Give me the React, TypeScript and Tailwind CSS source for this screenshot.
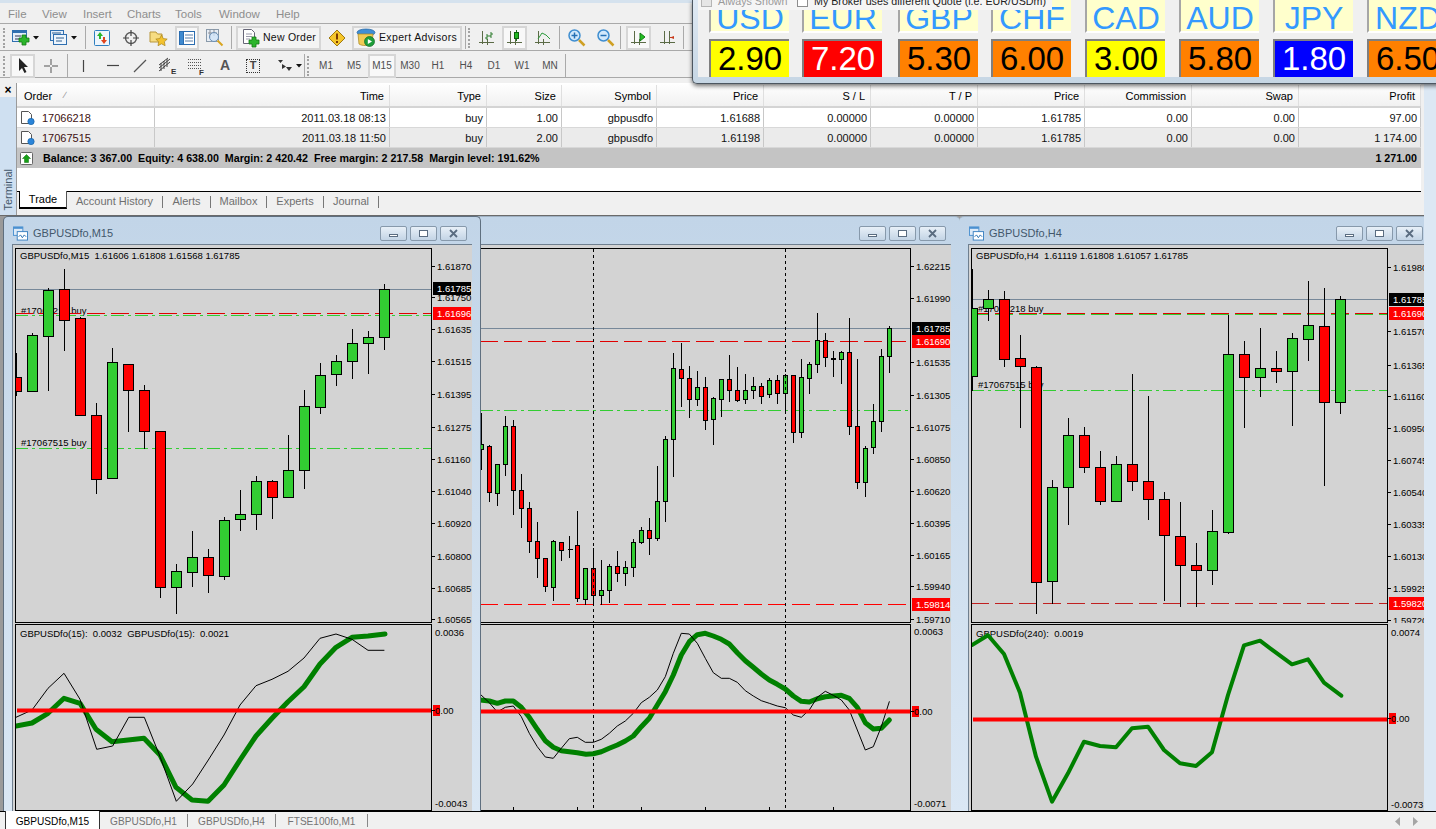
import type { ReactNode } from 'react';
import clsx from 'clsx';

type Candle = [number, number, number, number, 'r' | 'g'];
type Pt = [number, number];

const m15: Candle[] = [
  [245, 320, 364, 375, 'r'], [187, 196, 364, 364, 'g'], [52, 61, 199, 359, 'g'], [-6, 58, 149, 239, 'r'],
  [137, 145, 436, 436, 'r'], [397, 436, 628, 668, 'r'], [232, 277, 625, 625, 'g'], [283, 283, 361, 482, 'r'],
  [343, 361, 484, 535, 'r'], [480, 484, 952, 980, 'r'], [880, 904, 952, 1028, 'g'], [781, 862, 907, 947, 'g'],
  [835, 862, 916, 965, 'r'], [739, 751, 919, 926, 'g'], [658, 733, 748, 780, 'g'], [616, 634, 733, 776, 'g'],
  [628, 634, 682, 743, 'r'], [493, 601, 682, 682, 'g'], [358, 409, 601, 654, 'g'], [277, 316, 412, 428, 'g'],
  [253, 274, 313, 344, 'g'], [175, 220, 274, 323, 'g'], [181, 202, 220, 308, 'g'], [40, 58, 202, 236, 'g'],
];

const h1: Candle[] = [
  [336, 433, 448, 507, 'g'], [433, 439, 577, 603, 'r'], [493, 493, 580, 614, 'g'], [346, 379, 493, 525, 'g'],
  [358, 379, 571, 642, 'r'], [520, 571, 625, 682, 'r'], [603, 625, 724, 756, 'r'], [664, 724, 775, 831, 'r'],
  [772, 775, 859, 872, 'r'], [718, 724, 862, 899, 'g'], [724, 727, 751, 780, 'r'], [706, 748, 748, 771, 'g'],
  [631, 736, 895, 902, 'r'], [805, 805, 898, 913, 'g'], [742, 805, 886, 913, 'r'], [778, 871, 886, 913, 'g'],
  [790, 799, 871, 905, 'g'], [751, 799, 820, 843, 'r'], [781, 802, 820, 855, 'g'], [715, 727, 802, 828, 'g'],
  [679, 691, 727, 730, 'g'], [652, 691, 715, 762, 'r'], [496, 604, 715, 721, 'g'], [406, 418, 604, 663, 'g'],
  [157, 205, 418, 528, 'g'], [125, 208, 235, 318, 'r'], [196, 235, 298, 351, 'r'], [211, 262, 298, 315, 'g'],
  [229, 262, 361, 387, 'r'], [289, 295, 358, 432, 'g'], [235, 238, 298, 348, 'g'], [163, 238, 271, 303, 'r'],
  [199, 271, 301, 303, 'r'], [220, 271, 298, 309, 'g'], [229, 259, 271, 295, 'g'], [247, 259, 289, 309, 'r'],
  [232, 241, 283, 292, 'g'], [223, 241, 280, 309, 'r'], [220, 226, 280, 340, 'g'], [223, 226, 397, 426, 'r'],
  [175, 232, 397, 411, 'g'], [184, 193, 235, 280, 'g'], [37, 121, 193, 217, 'g'], [97, 121, 172, 199, 'r'],
  [151, 175, 176, 229, 'g'], [151, 157, 178, 250, 'g'], [52, 157, 379, 402, 'r'], [175, 379, 547, 564, 'r'],
  [436, 445, 547, 588, 'g'], [310, 364, 442, 460, 'g'], [145, 169, 364, 393, 'g'], [76, 85, 169, 217, 'g'],
];

const h4: Candle[] = [
  [-6, 115, 319, 361, 'g'], [58, 88, 115, 150, 'g'], [61, 88, 268, 288, 'r'], [193, 265, 289, 470, 'r'],
  [286, 292, 937, 1028, 'r'], [628, 652, 934, 1000, 'g'], [442, 496, 652, 761, 'g'], [469, 496, 592, 605, 'r'],
  [541, 592, 694, 701, 'r'], [556, 583, 694, 694, 'g'], [310, 583, 634, 659, 'r'], [376, 634, 688, 746, 'r'],
  [664, 688, 796, 989, 'r'], [694, 799, 886, 1007, 'r'], [817, 886, 901, 1007, 'r'], [718, 784, 901, 941, 'g'],
  [133, 253, 787, 790, 'g'], [211, 253, 322, 470, 'r'], [172, 295, 322, 377, 'g'], [241, 295, 304, 335, 'r'],
  [187, 205, 304, 464, 'g'], [31, 166, 208, 269, 'g'], [52, 169, 397, 644, 'r'], [76, 88, 397, 428, 'g'],
];

const m15Signal: Pt[] = [[48, 378], [96, 369], [144, 340], [192, 295], [240, 310], [288, 388], [336, 425], [384, 420], [432, 415], [480, 465], [528, 562], [576, 600], [624, 604], [672, 555], [720, 480], [768, 408], [816, 355], [864, 305], [912, 260], [960, 192], [1008, 142], [1056, 112], [1104, 108], [1155, 102]];
const m15Main: Pt[] = [[48, 352], [96, 330], [144, 265], [192, 220], [240, 298], [290, 448], [338, 438], [386, 352], [433, 352], [481, 472], [529, 604], [578, 552], [625, 480], [672, 405], [720, 315], [768, 257], [816, 238], [864, 214], [912, 174], [960, 115], [1008, 102], [1056, 118], [1104, 151], [1152, 151]];
const h1Signal: Pt[] = [[0, 240], [28, 243], [52, 250], [76, 243], [100, 243], [124, 262], [148, 292], [172, 328], [196, 362], [220, 382], [244, 392], [268, 395], [292, 398], [318, 403], [340, 401], [364, 395], [388, 385], [412, 375], [436, 363], [460, 348], [484, 320], [508, 295], [532, 255], [556, 215], [580, 165], [604, 105], [628, 65], [652, 44], [676, 40], [700, 48], [724, 58], [748, 72], [772, 98], [796, 122], [820, 142], [844, 162], [868, 180], [892, 193], [916, 207], [940, 228], [964, 244], [988, 246], [1012, 236], [1036, 230], [1060, 228], [1084, 226], [1108, 235], [1132, 262], [1156, 308], [1180, 327], [1204, 325], [1228, 300]];
const h1Main: Pt[] = [[0, 222], [28, 248], [52, 276], [76, 262], [100, 258], [124, 290], [148, 340], [172, 380], [196, 411], [220, 415], [244, 385], [268, 356], [292, 352], [316, 367], [340, 367], [364, 358], [388, 340], [412, 318], [436, 303], [460, 280], [484, 248], [508, 232], [532, 210], [556, 170], [580, 100], [604, 40], [628, 42], [652, 70], [676, 115], [700, 158], [724, 175], [748, 175], [772, 187], [796, 212], [820, 228], [844, 242], [868, 250], [892, 258], [916, 263], [940, 285], [964, 292], [988, 270], [1012, 232], [1036, 214], [1060, 226], [1084, 240], [1108, 270], [1132, 330], [1156, 390], [1180, 380], [1204, 320], [1228, 245]];
const h4Signal: Pt[] = [[36, 75], [84, 46], [132, 102], [180, 218], [228, 410], [276, 545], [324, 460], [372, 365], [420, 378], [468, 382], [516, 325], [564, 320], [612, 390], [660, 430], [708, 438], [756, 397], [804, 225], [852, 76], [900, 62], [948, 98], [996, 133], [1044, 118], [1092, 188], [1144, 227]];

function Candles({ data, first, step, half, ox, oy }: { data: Candle[]; first: number; step: number; half: number; ox: number; oy: number }) {
  return (
    <g shapeRendering="crispEdges">
      {data.map(([hi, top, bot, lo, c], i) => {
        const x = Math.floor(ox + (first + step * i) / 3) + 0.5;
        const py = (v: number) => Math.round(oy + v / 3) + 0.5;
        const h = py(bot) - py(top);
        return (
          <g key={i}>
            <line x1={x} x2={x} y1={py(hi)} y2={py(lo)} stroke="#000" />
            {h > 0 ? (
              <rect x={x - half} y={py(top)} width={half * 2} height={h} fill={c === 'r' ? '#ff0000' : '#32cd32'} stroke="#000" />
            ) : (
              <line x1={x - half} x2={x + half + 1} y1={py(top)} y2={py(top)} stroke="#000" />
            )}
          </g>
        );
      })}
    </g>
  );
}

function Series({ pts, ox, oy, w, color }: { pts: Pt[]; ox: number; oy: number; w: number; color: string }) {
  const d = pts.map(([x, y]) => `${(ox + x / 3).toFixed(1)},${(oy + y / 3).toFixed(1)}`).join(' ');
  return <polyline points={d} fill="none" stroke={color} strokeWidth={w} strokeLinejoin="round" strokeLinecap="round" />;
}

function HLine({ y, x1, x2, color, dash }: { y: number; x1: number; x2: number; color: string; dash?: string }) {
  return <line x1={x1} x2={x2} y1={y + 0.5} y2={y + 0.5} stroke={color} strokeDasharray={dash} shapeRendering="crispEdges" />;
}

function Label({ x, y, children, fill = '#000' }: { x: number; y: number; children: ReactNode; fill?: string }) {
  return (
    <text x={x} y={y} fontSize={9.5} fill={fill} className="whitespace-pre">
      {children}
    </text>
  );
}

function PriceAxis({ x, labels, boxes }: { x: number; labels: [string, number][]; boxes: [string, number, string][] }) {
  return (
    <>
      {labels.map(([t, y]) => (
        <g key={t}>
          <line x1={x} x2={x + 3} y1={y + 0.5} y2={y + 0.5} stroke="#000" shapeRendering="crispEdges" />
          <Label x={x + 5} y={y + 3.5}>{t}</Label>
        </g>
      ))}
      {boxes.map(([t, y, c]) => (
        <g key={t}>
          <rect x={x + 1} y={y - 6} width={38} height={13} fill={c} />
          <Label x={x + 5} y={y + 3.5} fill="#fff">{t}</Label>
        </g>
      ))}
    </>
  );
}

function MacdAxis({ x, hi, zero, lo }: { x: number; hi: [string, number]; zero: number; lo: [string, number] }) {
  return (
    <>
      <rect x={x + 1} y={zero - 5} width={7} height={11} fill="#ff0000" />
      <line x1={x} x2={x + 3} y1={zero + 0.5} y2={zero + 0.5} stroke="#000" />
      <Label x={x + 3} y={hi[1] + 3.5}>{hi[0]}</Label>
      <Label x={x + 3} y={zero + 3.5}>0.00</Label>
      <Label x={x + 3} y={lo[1] + 3.5}>{lo[0]}</Label>
    </>
  );
}

function TitleIcon() {
  return (
    <svg width="15" height="15" viewBox="0 0 16 15" className="shrink-0">
      <rect x="0.5" y="0.5" width="10" height="9" fill="#dceaf8" stroke="#4a90d0" />
      <rect x="0.5" y="0.5" width="10" height="2" fill="#4a90d0" />
      <rect x="4.5" y="5.5" width="11" height="9" fill="#fff" stroke="#3a80c0" />
      <path d="M6 11l2-2 2 3 2-3 2 2" fill="none" stroke="#2a70b0" />
    </svg>
  );
}

function WinButton({ kind }: { kind: 'min' | 'max' | 'close' }) {
  return (
    <div className="w-[27px] h-[15px] border border-[#8799ab] rounded-[2px] bg-gradient-to-b from-[#e8f0f8] to-[#c3d4e5] flex items-center justify-center">
      <svg width="11" height="9" viewBox="0 0 11 9">
        {kind === 'min' && <rect x="1.5" y="5.5" width="8" height="2" fill="#fff" stroke="#5a6c80" />}
        {kind === 'max' && <rect x="1.5" y="1.5" width="8" height="6" fill="#fff" stroke="#5a6c80" />}
        {kind === 'close' && <path d="M2 1l7 7M9 1l-7 7" stroke="#5a6c80" strokeWidth="1.8" />}
      </svg>
    </div>
  );
}

function ChartWindow({ title, className, plotLeft, plotWidth, active, upper, lower, upperAxis, lowerAxis }: {
  title: string; className: string; plotLeft: number; plotWidth: number; active?: boolean;
  upper: ReactNode; lower: ReactNode; upperAxis: ReactNode; lowerAxis: ReactNode;
}) {
  const plotRight = plotLeft + plotWidth;
  return (
    <div className={clsx('absolute top-0 h-[596px] flex flex-col rounded-t-[5px] bg-gradient-to-b from-[#c2d5e8] to-[#dae7f4] border-[#5f6f7f]', active ? 'border-x border-t px-[8px]' : 'border-t border-t-[#9fb1c3] px-[9px]', className)}>
      <div className="h-[27px] flex items-center shrink-0 gap-[3px] pt-[5px]">
        <div className="flex items-center gap-[5px] flex-1 pl-[1px]">
          <TitleIcon />
          <span className="text-[11px] text-[#43586c]">{title}</span>
        </div>
        <WinButton kind="min" />
        <WinButton kind="max" />
        <WinButton kind="close" />
        <div className="w-[2px]" />
      </div>
      <div className="flex-1 min-h-0 flex flex-col bg-[#d3d3d3] pt-[3px] pl-[2px] border-t border-l border-[#6f7f8f] gap-px">
        <div className="flex h-[375px] shrink-0">
          <div className="border border-black overflow-hidden w-full">
            <svg width={plotWidth - 2} height={373} viewBox={`${plotLeft + 1} 249 ${plotWidth - 2} 373`} className="block">{upper}</svg>
          </div>
          <svg width={40} height={375} viewBox={`${plotRight} 248 40 375`} className="block shrink-0">{upperAxis}</svg>
        </div>
        <div className="flex h-[187px] shrink-0">
          <div className="border border-black overflow-hidden w-full">
            <svg width={plotWidth - 2} height={185} viewBox={`${plotLeft + 1} 625 ${plotWidth - 2} 185`} className="block">{lower}</svg>
          </div>
          <svg width={40} height={187} viewBox={`${plotRight} 624 40 187`} className="block shrink-0">{lowerAxis}</svg>
        </div>
      </div>
    </div>
  );
}

/* toolbar bits */
function Grip({ className }: { className?: string }) {
  return <div className={clsx('w-[3px] h-[20px] shrink-0 border-l-2 border-dotted border-[#a2a2a2]', className)} />;
}
function Sep({ className }: { className?: string }) {
  return <div className={clsx('w-px h-[23px] shrink-0 bg-[#aaaaaa]', className)} />;
}
function Btn({ className, pressed, children }: { className: string; pressed?: boolean; children?: ReactNode }) {
  return (
    <div className={clsx('h-[24px] shrink-0 flex items-center justify-center gap-[3px]', pressed && 'border-2 border-[#d6d6d6] bg-[#f8f8f8]', className)}>
      {children}
    </div>
  );
}
function Caret() {
  return (
    <svg width="6" height="4" viewBox="0 0 6 4" className="shrink-0">
      <path d="M0 0h6L3 3.5z" fill="#111" />
    </svg>
  );
}
function Icon({ w = 18, h = 18, children }: { w?: number; h?: number; children: ReactNode }) {
  return (
    <svg width={w} height={h} viewBox={`0 0 ${w} ${h}`} className="shrink-0">
      {children}
    </svg>
  );
}
const GreenPlus = ({ x, y }: { x: number; y: number }) => (
  <path d={`M${x + 3} ${y}h4v3h3v4h-3v3h-4v-3h-3v-4h3z`} fill="#2bb52b" stroke="#157a15" strokeWidth="0.8" />
);
const Axes = () => <path d="M4.5 2v13M1 13.5h15M9.5 10v6" stroke="#5b6b46" fill="none" />;

function Toolbar1() {
  return (
    <div className="h-[27px] flex items-center pl-[3px] pt-px border-b border-[#a9a9a9]">
      <Grip />
      <Btn className="w-[38px]">
        <Icon w={19} h={17}>
          <rect x="1.5" y="1.5" width="14" height="11" fill="#e3eefa" stroke="#2f6fb0" />
          <rect x="1.5" y="1.5" width="14" height="2.5" fill="#2f6fb0" />
          <path d="M4 7h6M4 10h4" stroke="#335" />
          <GreenPlus x={8} y={6} />
        </Icon>
        <Caret />
      </Btn>
      <Btn className="w-[37px]">
        <Icon w={19} h={17}>
          <rect x="1.5" y="1.5" width="13" height="10" fill="#e3eefa" stroke="#2f6fb0" />
          <rect x="4.5" y="5.5" width="13" height="10" fill="#eef5fc" stroke="#2f6fb0" />
          <path d="M7 9h8M7 12h6M3 4h9" stroke="#2f5f90" />
        </Icon>
        <Caret />
      </Btn>
      <Sep className="ml-[4px]" />
      <Btn className="w-[32px]">
        <Icon>
          <rect x="1.5" y="1.5" width="15" height="15" rx="1" fill="#eef5fc" stroke="#2f7fc0" />
          <path d="M7 3l3 4H8v3H6V7H4z" fill="#2bb52b" />
          <path d="M11 15l-3-4h2V8h2v3h2z" fill="#e0441e" />
        </Icon>
      </Btn>
      <Btn className="w-[25px]">
        <Icon>
          <circle cx="9" cy="9" r="5.5" fill="none" stroke="#5a5a5a" strokeWidth="1.4" />
          <path d="M9 1v6M9 11v6M1 9h6M11 9h6" stroke="#444" strokeWidth="1.2" />
        </Icon>
      </Btn>
      <Btn className="w-[30px]">
        <Icon w={19} h={18}>
          <path d="M1 3h6l1.500 2H13v8H1z" fill="#f6dc82" stroke="#b8963a" />
          <path d="M12.500 6l1.800 3.600 3.900.5-2.800 2.700.7 3.900-3.600-1.900-3.500 1.900.7-3.900-2.900-2.700 4-.5z" fill="#f3c22e" stroke="#a8821a" strokeWidth="0.7" />
        </Icon>
      </Btn>
      <Btn className="ml-[2px] w-[24px]" pressed>
        <Icon>
          <rect x="1.500" y="2.500" width="15" height="13" fill="#fff" stroke="#2a6cb0" />
          <rect x="1.500" y="2.500" width="4" height="13" fill="#3f8ad0" stroke="#2a6cb0" />
          <path d="M7 6h8M7 9h8M7 12h8" stroke="#5a7ea8" />
        </Icon>
      </Btn>
      <Btn className="w-[31px]">
        <Icon w={19} h={19}>
          <rect x="1.500" y="1.500" width="12" height="12" fill="#e8eef5" stroke="#8a9aaa" />
          <path d="M5 2v8M9 1v7M3 5h9" stroke="#8a8f98" />
          <circle cx="9" cy="9" r="4.500" fill="#cfe4f8" fillOpacity="0.8" stroke="#6a8fb5" />
          <path d="M12.500 12.500l5 5" stroke="#d9a520" strokeWidth="2" />
        </Icon>
      </Btn>
      <Sep className="ml-px" />
      <Btn className="ml-[4px] w-[85px] border-2 border-[#d6d6d6] bg-[#f4f4f4] justify-start pl-[3px]">
        <Icon w={20} h={20}>
          <path d="M2.500 1.500h8l3 3v11h-11z" fill="#fff" stroke="#667" />
          <path d="M5 6h6M5 8.500h6M5 11h4" stroke="#99a" />
          <GreenPlus x={8} y={9} />
        </Icon>
        <span className="-ml-[1px] whitespace-nowrap text-[10.500px] tracking-[0.25px] text-[#111]">New Order</span>
      </Btn>
      <Btn className="w-[31px]">
        <Icon>
          <path d="M9 1l8 8-8 8-8-8z" fill="#f6c62a" stroke="#a07a10" strokeLinejoin="round" />
          <path d="M9 4.500v6" stroke="#7a3a00" strokeWidth="2" />
          <rect x="8" y="12" width="2" height="2" fill="#7a3a00" />
        </Icon>
      </Btn>
      <Btn className="w-[110px] border-2 border-[#d6d6d6] bg-[#f4f4f4] justify-start pl-[1px]">
        <Icon w={22} h={20}>
          <ellipse cx="11" cy="4.500" rx="9" ry="3.500" fill="#3e8fd6" stroke="#22609c" strokeWidth="0.7" />
          <path d="M3 6h15l-1 10c-4 2-10 2-13 0z" fill="#f0cb55" stroke="#a5841f" strokeWidth="0.7" />
          <circle cx="14.500" cy="13.500" r="5" fill="#1e9e3a" stroke="#0e6a22" strokeWidth="0.7" />
          <path d="M12.800 11l4.200 2.500-4.200 2.500z" fill="#fff" />
        </Icon>
        <span className="-ml-[1px] whitespace-nowrap text-[10.500px] tracking-[0.35px] text-[#111]">Expert Advisors</span>
      </Btn>
      <Sep className="ml-[3px]" />
      <Grip className="ml-[2px]" />
      <Btn className="w-[31px]">
        <Icon>
          <Axes />
          <path d="M9 5v6M9 7h2M7 9h2M13 3v6M13 5h2M11 7h2" stroke="#2f7d2f" fill="none" />
        </Icon>
      </Btn>
      <Btn className="w-[25px]" pressed>
        <Icon>
          <Axes />
          <path d="M10.500 1v11" stroke="#1f6f1f" />
          <rect x="8.500" y="3.500" width="4" height="6" fill="#22b822" stroke="#0d5f0d" />
        </Icon>
      </Btn>
      <Btn className="w-[31px]">
        <Icon>
          <Axes />
          <path d="M4 10l4-6 4 2 4 4" stroke="#2a9a3a" fill="none" />
        </Icon>
      </Btn>
      <Sep className="ml-px" />
      <Btn className="w-[32px]">
        <Icon w={19} h={19}>
          <circle cx="7.500" cy="7.500" r="5.500" fill="#d2e9fb" stroke="#3f8ed0" strokeWidth="1.500" />
          <path d="M7.500 4.500v6M4.500 7.500h6" stroke="#2470b4" strokeWidth="1.500" />
          <path d="M12 12l5.500 5.500" stroke="#cfa024" strokeWidth="2.500" />
        </Icon>
      </Btn>
      <Btn className="w-[26px]">
        <Icon w={19} h={19}>
          <circle cx="7.500" cy="7.500" r="5.500" fill="#d2e9fb" stroke="#3f8ed0" strokeWidth="1.500" />
          <path d="M4.500 7.500h6" stroke="#2470b4" strokeWidth="1.500" />
          <path d="M12 12l5.500 5.500" stroke="#cfa024" strokeWidth="2.500" />
        </Icon>
      </Btn>
      <Sep className="ml-[2px]" />
      <Btn className="ml-[5px] w-[25px]" pressed>
        <Icon>
          <Axes />
          <path d="M10 4l5 4-5 4z" fill="#22c022" stroke="#137a13" />
        </Icon>
      </Btn>
      <Btn className="w-[32px]">
        <Icon>
          <path d="M6.500 2v13M2 13.500h15M11.500 2v13" stroke="#5b6b46" fill="none" />
          <path d="M16 7l-4 1.500L16 10z" fill="#c8391a" />
          <path d="M12 8.500h4" stroke="#c8391a" />
        </Icon>
      </Btn>
      <Sep />
    </div>
  );
}

function PeriodBtn({ label, pressed }: { label: string; pressed?: boolean }) {
  return (
    <Btn className="w-[28px] text-[10px] text-[#4f4f4f]" pressed={pressed}>
      {label}
    </Btn>
  );
}

function Toolbar2() {
  return (
    <div className="h-[27px] flex items-center pl-[3px] pt-[3px] border-b border-[#a9a9a9]">
      <Grip />
      <Btn className="ml-[4px] w-[25px]" pressed>
        <Icon w={12} h={17}>
          <path d="M2 1v13l3-3 2.500 5 2-1-2.500-5h4z" fill="#222" />
        </Icon>
      </Btn>
      <Btn className="w-[31px]">
        <Icon>
          <path d="M9 2v6M9 10v6M2 9h6M10 9h6" stroke="#555" />
        </Icon>
      </Btn>
      <Sep className="ml-px" />
      <Btn className="w-[32px]">
        <Icon w={4} h={14}>
          <path d="M1.500 1v12" stroke="#444" strokeWidth="1.200" />
        </Icon>
      </Btn>
      <Btn className="w-[26px]">
        <Icon w={14} h={4}>
          <path d="M1 1.500h12" stroke="#444" strokeWidth="1.200" />
        </Icon>
      </Btn>
      <Btn className="w-[28px]">
        <Icon w={14} h={14}>
          <path d="M1 13L13 1" stroke="#555" strokeWidth="1.200" />
        </Icon>
      </Btn>
      <Btn className="w-[27px]">
        <Icon w={19} h={18}>
          <path d="M1 11L12 2M1 14L12 5M1 8L10 1" stroke="#444" />
          <path d="M3 6v8M6 4v8M9 2v8" stroke="#444" />
          <text x="13" y="17" fontSize="8" fontWeight="700" fill="#333">E</text>
        </Icon>
      </Btn>
      <Btn className="w-[30px]">
        <Icon w={19} h={18}>
          <path d="M1 2.500h13M1 5.500h13M1 8.500h13M1 11.500h13" stroke="#555" strokeDasharray="1 1" />
          <text x="12" y="17.500" fontSize="8" fontWeight="700" fill="#333">F</text>
        </Icon>
      </Btn>
      <Btn className="w-[28px] text-[14px] font-bold text-[#555]">A</Btn>
      <Btn className="w-[28px]">
        <div className="w-[14px] h-[14px] border border-dotted border-[#333] flex items-center justify-center text-[11px] font-bold leading-none text-[#444]">T</div>
      </Btn>
      <Btn className="w-[37px] pl-[8px]">
        <Icon w={16} h={14}>
          <path d="M1 1h5L3.500 4zM5 5l4 2.500L5 10zM9 8h6l-3 4z" fill="#333" />
        </Icon>
        <Caret />
      </Btn>
      <Sep />
      <Grip className="ml-[2px]" />
      <div className="w-[2px]" />
      {['M1', 'M5', 'M15', 'M30', 'H1', 'H4', 'D1', 'W1', 'MN'].map((l) => (
        <PeriodBtn key={l} label={l} pressed={l === 'M15'} />
      ))}
      <Sep className="ml-px" />
    </div>
  );
}

const currencies = [
  { name: 'USD', value: '2.90', bg: 'bg-[#ffff00]', fg: 'text-black' },
  { name: 'EUR', value: '7.20', bg: 'bg-[#ff0000]', fg: 'text-white' },
  { name: 'GBP', value: '5.30', bg: 'bg-[#ff8000]', fg: 'text-black' },
  { name: 'CHF', value: '6.00', bg: 'bg-[#ff8000]', fg: 'text-black' },
  { name: 'CAD', value: '3.00', bg: 'bg-[#ffff00]', fg: 'text-black' },
  { name: 'AUD', value: '5.80', bg: 'bg-[#ff8000]', fg: 'text-black' },
  { name: 'JPY', value: '1.80', bg: 'bg-[#0000ff]', fg: 'text-white' },
  { name: 'NZD', value: '6.50', bg: 'bg-[#ff8000]', fg: 'text-black' },
];

function MeterWindow() {
  return (
    <div className="absolute left-[692px] top-0 w-[760px] h-[84px] rounded-bl-[5px] bg-gradient-to-b from-[#dfe9f3] to-[#c6d6e4] border-l border-b border-[#4c5660] pl-[5px] pb-[6px] shadow-[0_2px_4px_rgba(0,0,0,0.55)]">
      <div className="relative h-full bg-[#f0f0f0] overflow-hidden">
        <div className="absolute left-0 top-0 h-[10px] w-[354px] bg-[#f5f5f5] flex items-center text-[10.700px] leading-none z-10">
          <div className="ml-[3px] w-[11px] h-[11px] border border-[#b5b5b5] bg-[#e6e6e6] shrink-0 -mt-[8px]" />
          <span className="ml-[6px] w-[73px] text-[#9a9a9a] whitespace-nowrap -mt-[7px]">Always Shown</span>
          <div className="ml-[6px] w-[11px] h-[11px] border border-[#8e8e8e] bg-white shrink-0 -mt-[8px]" />
          <span className="ml-[6px] whitespace-nowrap text-[#222] -mt-[7px]">My Broker uses different Quote (i.e. EUR/USDm)</span>
        </div>
        <div className="ml-[11px] grid grid-cols-[93px_96px_93px_94px_94px_94px_94px_94px] h-full">
          {currencies.map((c) => (
            <div key={c.name} className="flex flex-col w-[80px]">
              <div className="h-[33px] shrink-0 bg-[#ffffcc] border-l-2 border-b-2 border-l-[#a6a6a6] border-b-[#ffffff] flex items-center justify-center text-[32px] leading-none text-[#3399ff] pt-[5px]">
                {c.name}
              </div>
              <div className="mt-[6px] flex-1 flex flex-col">
                <div className={clsx('flex-1 border-l-2 border-t-2 border-[#7f7f7f] flex items-center justify-center text-[33px] leading-none pb-[2px]', c.bg, c.fg)}>
                  {c.value}
                </div>
              </div>
            </div>
          ))}
        </div>
      </div>
    </div>
  );
}

const COLS = 'grid grid-cols-[138px_235px_97px_75px_95px_107px_107px_107px_107px_107px_107px_122px]';
const headers = ['Time', 'Type', 'Size', 'Symbol', 'Price', 'S / L', 'T / P', 'Price', 'Commission', 'Swap', 'Profit'];
const rows = [
  { id: '17066218', cells: ['2011.03.18 08:13', 'buy', '1.00', 'gbpusdfo', '1.61688', '0.00000', '0.00000', '1.61785', '0.00', '0.00', '97.00'], bg: 'bg-white' },
  { id: '17067515', cells: ['2011.03.18 11:50', 'buy', '2.00', 'gbpusdfo', '1.61198', '0.00000', '0.00000', '1.61785', '0.00', '0.00', '1 174.00'], bg: 'bg-[#ebebeb]' },
];

function OrderIcon() {
  return (
    <svg width="15" height="15" viewBox="0 0 15 15" className="shrink-0">
      <path d="M1.500 1.500h7l3 3v9h-10z" fill="#fff" stroke="#555" />
      <circle cx="11" cy="11.500" r="3.200" fill="#2a84d8" stroke="#17609f" strokeWidth="0.6" />
    </svg>
  );
}

function Terminal() {
  return (
    <div className="h-[132px] flex shrink-0">
      <div className="w-[17px] shrink-0 flex flex-col border-r border-[#9a9a9a] bg-[#cfe0f1]">
        <div className="h-[14px] bg-[#f0f0f0] flex items-center justify-center text-[12px] font-bold leading-none text-black">×</div>
        <div className="flex-1 flex flex-col justify-end items-center pb-[4px]">
          <span className="[writing-mode:vertical-rl] rotate-180 text-[11px] leading-none text-[#44586c]">Terminal</span>
        </div>
      </div>
      <div className="w-[1404px] shrink-0 flex flex-col bg-white text-[11px] text-black">
        <div className={clsx(COLS, 'h-[25px] pt-[2px] bg-gradient-to-b from-white to-[#f1f1f1] border-b-2 border-[#d4d4d4] items-stretch')}>
          <div className="flex items-center pl-[7px] pt-px border-r border-[#dfdfdf]">
            Order<span className="ml-[12px] text-[9px] text-[#888]">∕</span>
          </div>
          {headers.map((h, i) => (
            <div key={i} className="flex items-center justify-end pr-[5px] pt-px border-r border-[#dfdfdf]">{h}</div>
          ))}
        </div>
        {rows.map((r) => (
          <div key={r.id} className={clsx(COLS, 'h-[20px] border-b border-[#d8d8d8]', r.bg)}>
            <div className="flex items-center pl-[3px] border-r border-[#c8c8c8]">
              <OrderIcon />
              <span className="ml-[7px] pt-px text-[#401010]">{r.id}</span>
            </div>
            {r.cells.map((c, i) => (
              <div key={i} className="flex items-center justify-end pr-[3px] pt-px border-r border-[#c8c8c8] text-[#111]">{c}</div>
            ))}
          </div>
        ))}
        <div className="h-[20px] bg-[#c4c4c4] flex items-center pl-[3px] pr-[4px] font-bold text-[10.700px]">
          <svg width="13" height="13" viewBox="0 0 13 13" className="shrink-0">
            <rect x="0.500" y="0.500" width="12" height="12" rx="1" fill="#fff" stroke="#666" />
            <path d="M6.500 2.500l4 4H8.500v4h-4v-4H2.500z" fill="#16a016" stroke="#0c6a0c" strokeWidth="0.5" />
          </svg>
          <span className="ml-[10px] whitespace-pre">Balance: 3 367.00  Equity: 4 638.00  Margin: 2 420.42  Free margin: 2 217.58  Margin level: 191.62%</span>
          <span className="ml-auto">1 271.00</span>
        </div>
        <div className="h-[23px] shrink-0" />
        <div className="flex-1 bg-[#f0f0f0] border-t border-black pl-[2px] flex items-start text-[#6f6f6f] text-[11px]">
          <div className="w-[48px] h-[18px] -mt-px pt-px bg-white border-x border-b-2 border-black border-r-[#555] text-black flex items-center justify-center">Trade</div>
          {[
            { t: 'Account History', c: 'w-[96px]' },
            { t: 'Alerts', c: 'w-[48px]' },
            { t: 'Mailbox', c: 'w-[56px]' },
            { t: 'Experts', c: 'w-[57px]' },
            { t: 'Journal', c: 'w-[55px]' },
          ].map((tab) => (
            <div key={tab.t} className="flex items-center h-[16px]">
              <div className={clsx('flex items-center justify-center border-r border-[#777] h-[12px] mt-[3px]', tab.c)}>{tab.t}</div>
            </div>
          ))}
        </div>
        <div className="h-[3px] bg-[#f0f0f0]" />
      </div>
      <div className="flex-1 bg-[#dce8f4] border-l-[3px] border-[#f0f0f0]" />
    </div>
  );
}

function BottomTabs() {
  return (
    <div className="h-[18px] shrink-0 bg-[#f0f0f0] border-t border-black flex items-stretch text-[10.100px] text-[#747474] relative z-10">
      <div className="w-[5px]" />
      <div className="w-[95px] -mt-px pt-[4px] bg-white border-x border-[#333] text-black flex items-center justify-center">GBPUSDfo,M15</div>
      <div className="w-[88px] flex items-center justify-center border-r border-[#888] my-[2px] pt-[3px]">GBPUSDfo,H1</div>
      <div className="w-[88px] flex items-center justify-center border-r border-[#888] my-[2px] pt-[3px]">GBPUSDfo,H4</div>
      <div className="w-[92px] flex items-center justify-center border-r border-[#888] my-[2px] pt-[3px]">FTSE100fo,M1</div>
      <div className="ml-auto flex items-center gap-[11px] pr-[18px] pt-[2px]">
        <svg width="6" height="9" viewBox="0 0 6 9"><path d="M5 0v9L0 4.500z" fill="#a5a5a5" /></svg>
        <svg width="6" height="9" viewBox="0 0 6 9"><path d="M1 0v9l5-4.500z" fill="#a5a5a5" /></svg>
      </div>
    </div>
  );
}

export default function App() {
  return (
    <div className="relative w-[1436px] h-[829px] overflow-hidden flex flex-col bg-[#f0f0f0] font-['Liberation_Sans',Arial,sans-serif] text-[11px]">
      <div className="h-[24px] shrink-0 border-b border-[#a9a9a9] border-t-[3px] border-t-[#d5e2ee] flex items-center pl-[8px] pt-[3px] text-[11.500px] text-[#8e8e8e]">
        <span className="w-[34px]">File</span>
        <span className="w-[41px]">View</span>
        <span className="w-[44px]">Insert</span>
        <span className="w-[48px]">Charts</span>
        <span className="w-[44px]">Tools</span>
        <span className="w-[57px]">Window</span>
        <span>Help</span>
      </div>
      <Toolbar1 />
      <Toolbar2 />
      <div className="h-[5px] shrink-0" />
      <Terminal />
      <div className="flex-1 min-h-0 flex">
        <div className="relative w-[1424px] shrink-0 overflow-hidden bg-[#9a9a9a] border-t border-[#6a6a6a]">
          <ChartWindow
            title="GBPUSDfo,H1"
            className="left-[300px] w-[660px]"
            plotLeft={312}
            plotWidth={599}
            upper={
              <>
                <HLine y={328} x1={312} x2={911} color="#778899" />
                <HLine y={341} x1={312} x2={911} color="#e00000" dash="18 6" />
                <HLine y={410} x1={312} x2={911} color="#32cd32" dash="13 4 3 4" />
                <HLine y={604} x1={312} x2={911} color="#ff0000" dash="18 6" />
                <Candles data={h1} first={4} step={24} half={2} ox={480} oy={300} />
                <line x1={593.5} x2={593.5} y1={249} y2={622} stroke="#000" strokeDasharray="3 3" shapeRendering="crispEdges" />
                <line x1={785.5} x2={785.5} y1={249} y2={622} stroke="#000" strokeDasharray="3 3" shapeRendering="crispEdges" />
              </>
            }
            upperAxis={
              <PriceAxis
                x={911}
                labels={[['1.62215', 266], ['1.61990', 298], ['1.61535', 362], ['1.61305', 395], ['1.61075', 427], ['1.60850', 459], ['1.60620', 491], ['1.60395', 523], ['1.60165', 555], ['1.59940', 586], ['1.59710', 619]]}
                boxes={[['1.61785', 328, '#000'], ['1.61690', 341, '#ff0000'], ['1.59814', 604, '#ff0000']]}
              />
            }
            lower={
              <>
                <line x1={593.5} x2={593.5} y1={625} y2={810} stroke="#000" strokeDasharray="3 3" shapeRendering="crispEdges" />
                <line x1={785.5} x2={785.5} y1={625} y2={810} stroke="#000" strokeDasharray="3 3" shapeRendering="crispEdges" />
                <Series pts={h1Signal} ox={480} oy={620} w={5} color="#008000" />
                <Series pts={h1Main} ox={480} oy={620} w={1} color="#000" />
                <line x1={312} x2={911} y1={711.500} y2={711.500} stroke="#ff0000" strokeWidth={4} />
                {[513, 577, 641, 705, 769, 833].map((x) => (
                  <line key={x} x1={x + 0.5} x2={x + 0.5} y1={807} y2={810} stroke="#000" />
                ))}
              </>
            }
            lowerAxis={<MacdAxis x={911} hi={['0.0063', 631]} zero={711} lo={['-0.0071', 803]} />}
          />
          <ChartWindow
            title="GBPUSDfo,H4"
            className="left-[959px] w-[478px]"
            plotLeft={971}
            plotWidth={417}
            upper={
              <>
                <Label x={978} y={312}>#17066218 buy</Label>
                <Label x={978} y={388}>#17067515 buy</Label>
                <HLine y={299} x1={971} x2={1388} color="#778899" />
                <HLine y={314} x1={971} x2={1388} color="#32cd32" dash="18 6" />
                <HLine y={313} x1={971} x2={1388} color="#e00000" dash="18 6" />
                <HLine y={390} x1={971} x2={1388} color="#32cd32" dash="13 4 3 4" />
                <HLine y={603} x1={971} x2={1388} color="#c02020" dash="18 6" />
                <Candles data={h4} first={7} step={48} half={5} ox={970} oy={270} />
                <Label x={976} y={259}>GBPUSDfo,H4  1.61119 1.61808 1.61057 1.61785</Label>
              </>
            }
            upperAxis={
              <PriceAxis
                x={1388}
                labels={[['1.61980', 267], ['1.61570', 331], ['1.61365', 365], ['1.61160', 396], ['1.60950', 428], ['1.60745', 460], ['1.60540', 492], ['1.60335', 524], ['1.60130', 556], ['1.59925', 588], ['1.59720', 620]]}
                boxes={[['1.61785', 299, '#000'], ['1.61690', 313, '#ff0000'], ['1.59820', 603, '#ff0000']]}
              />
            }
            lower={
              <>
                <Label x={976} y={637}>GBPUSDfo(240):  0.0019</Label>
                <Series pts={h4Signal} ox={960} oy={620} w={4} color="#008000" />
                <line x1={973} x2={1388} y1={719.500} y2={719.500} stroke="#ff0000" strokeWidth={4} />
              </>
            }
            lowerAxis={<MacdAxis x={1388} hi={['0.0074', 632]} zero={718} lo={['-0.0073', 804]} />}
          />
          <ChartWindow
            title="GBPUSDfo,M15"
            className="left-[3px] w-[478px]"
            plotLeft={15}
            plotWidth={417}
            active
            upper={
              <>
                <Label x={21} y={314}>#17066218 buy</Label>
                <Label x={21} y={446}>#17067515 buy</Label>
                <HLine y={289} x1={15} x2={432} color="#778899" />
                <HLine y={315} x1={15} x2={432} color="#32cd32" dash="13 4 3 4" />
                <HLine y={313} x1={15} x2={432} color="#e00000" dash="18 6" />
                <HLine y={448} x1={15} x2={432} color="#32cd32" dash="13 4 3 4" />
                <Candles data={m15} first={19} step={48} half={5} ox={10} oy={270} />
                <Label x={20} y={259}>GBPUSDfo,M15  1.61606 1.61808 1.61568 1.61785</Label>
              </>
            }
            upperAxis={
              <PriceAxis
                x={432}
                labels={[['1.61870', 266], ['1.61750', 297], ['1.61635', 329], ['1.61515', 361], ['1.61395', 394], ['1.61275', 427], ['1.61160', 459], ['1.61040', 491], ['1.60920', 523], ['1.60800', 556], ['1.60685', 588], ['1.60565', 619]]}
                boxes={[['1.61785', 288, '#000'], ['1.61696', 313, '#ff0000']]}
              />
            }
            lower={
              <>
                <Label x={20} y={637}>GBPUSDfo(15):  0.0032  GBPUSDfo(15):  0.0021</Label>
                <Series pts={m15Signal} ox={0} oy={600} w={5} color="#008000" />
                <Series pts={m15Main} ox={0} oy={600} w={1} color="#000" />
                <line x1={17} x2={432} y1={710.500} y2={710.500} stroke="#ff0000" strokeWidth={4} />
              </>
            }
            lowerAxis={<MacdAxis x={432} hi={['0.0036', 632]} zero={710} lo={['-0.0043', 803]} />}
          />
        </div>
        <div className="flex-1 bg-[#dce8f4]" />
      </div>
      <BottomTabs />
      <MeterWindow />
    </div>
  );
}
